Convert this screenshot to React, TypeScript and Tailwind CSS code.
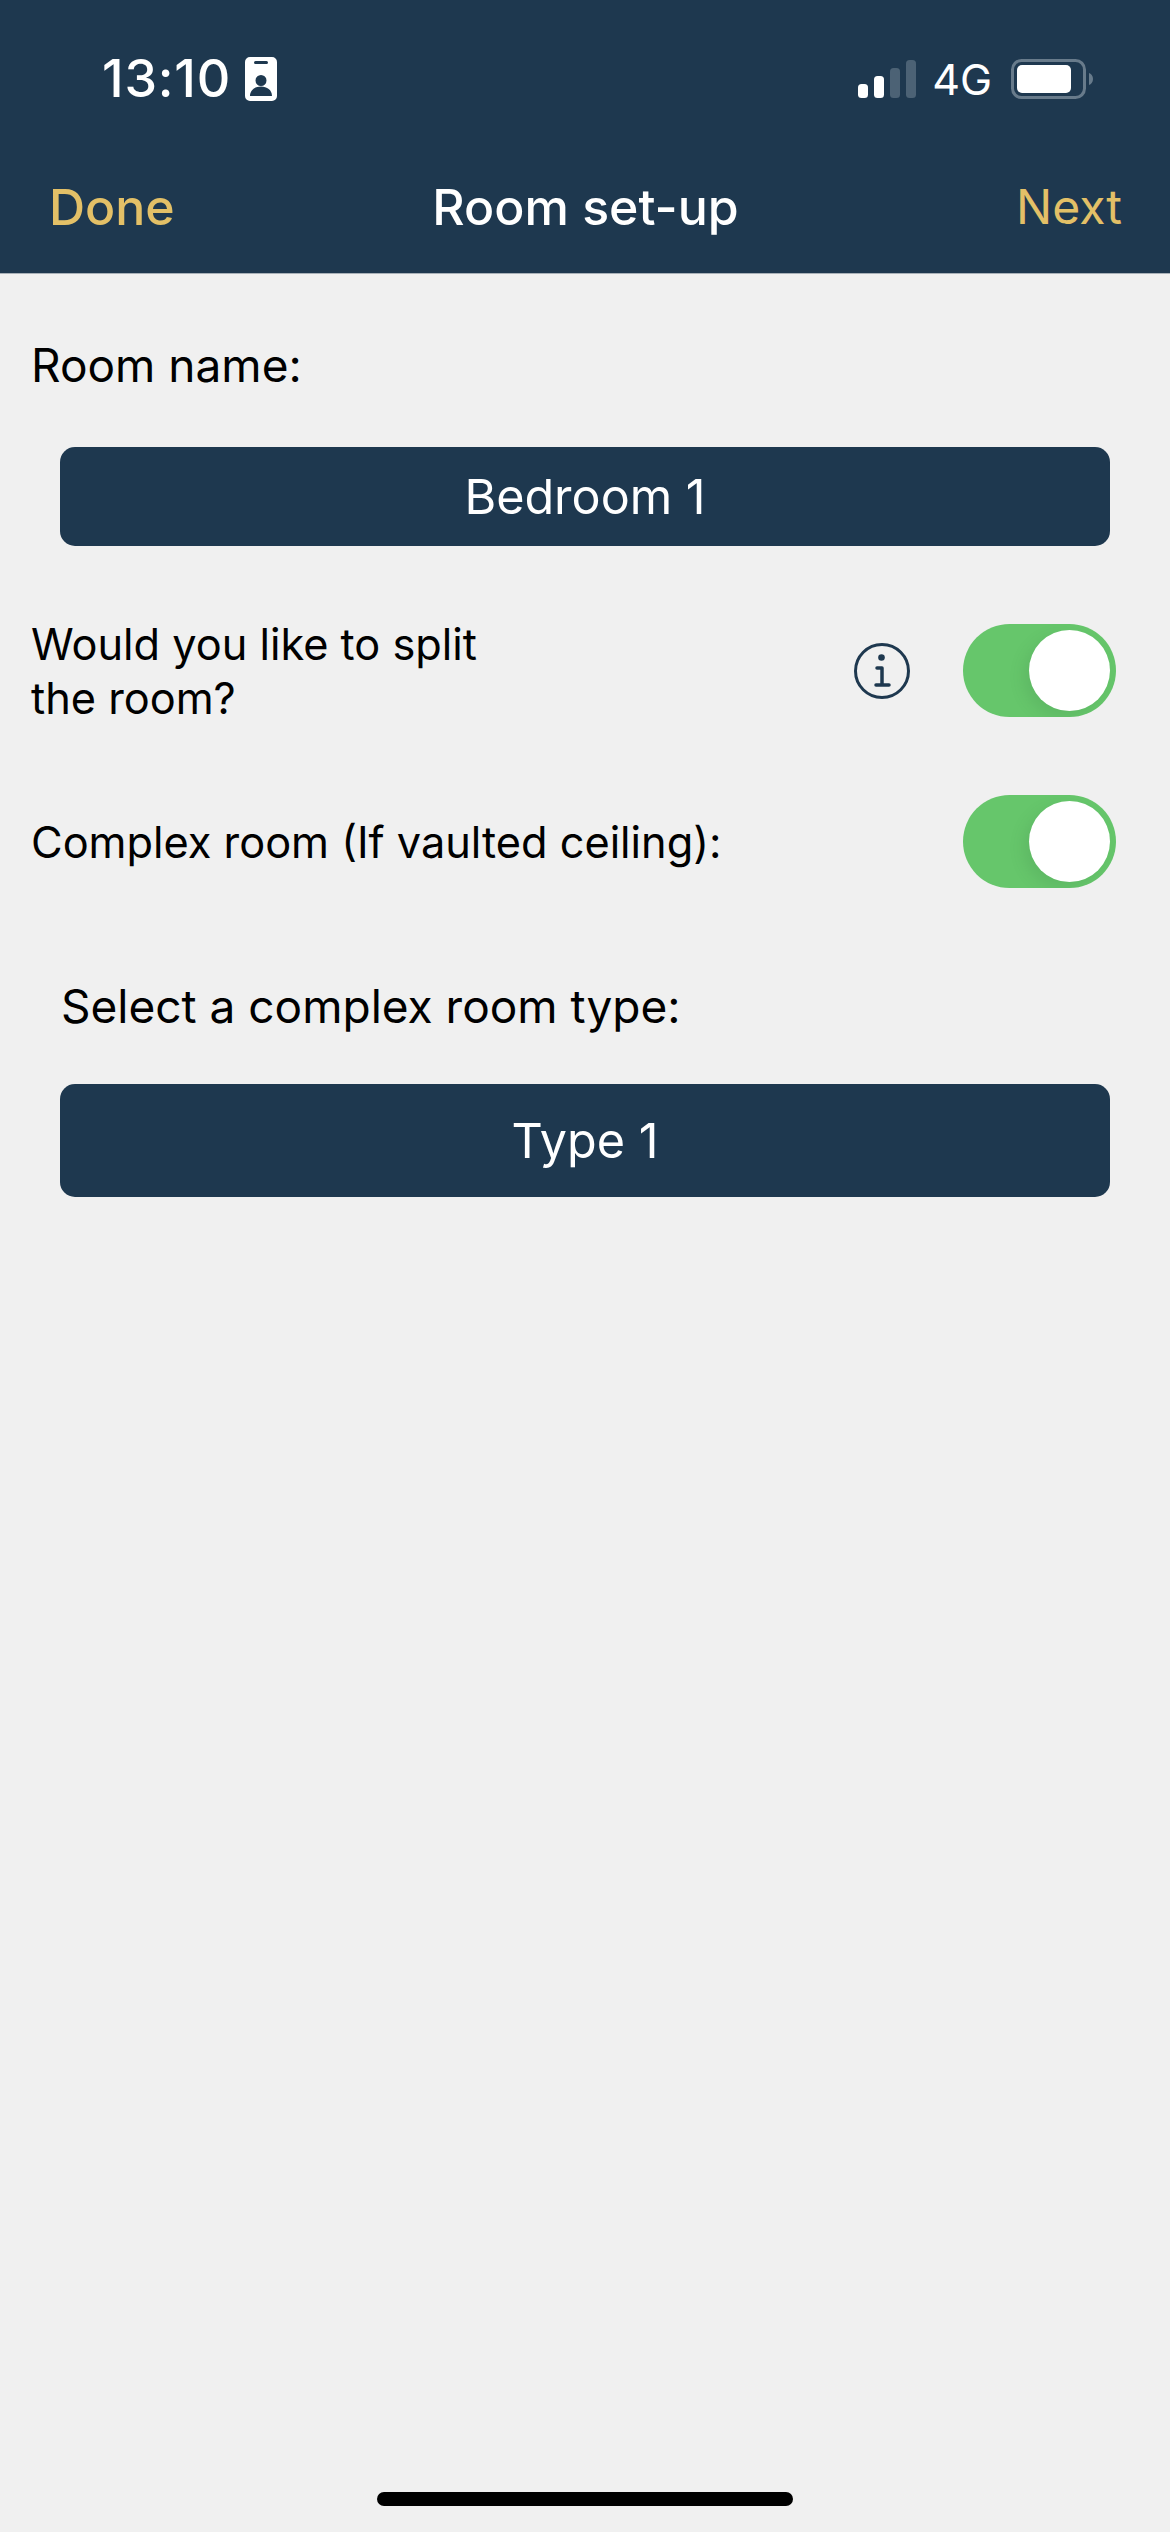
import { ReactNode } from 'react';

const FONT = "font-['Inter','Liberation_Sans',sans-serif]";

function ContactBadge() {
  return (
    <svg width="32" height="44" viewBox="0 0 32 44" className="ml-[14px]">
      <path
        fillRule="evenodd"
        fill="#ffffff"
        d="M5 0h22a5 5 0 0 1 5 5v34a5 5 0 0 1-5 5H5a5 5 0 0 1-5-5V5a5 5 0 0 1 5-5zM10.500 4a1.500 1.500 0 0 0 0 3h11a1.500 1.500 0 0 0 0-3zM16 18a5.500 5.500 0 0 0-5.500 5.500a5.500 5.500 0 0 0 11 0A5.500 5.500 0 0 0 16 18zM5 39h22c0-6-5-9.500-11-9.500S5 33 5 39z"
      />
    </svg>
  );
}

function SignalBars() {
  return (
    <svg width="58" height="38" viewBox="0 0 58 38">
      <rect x="0" y="24" width="10" height="14" rx="3.500" fill="#ffffff" />
      <rect x="16" y="16" width="10" height="22" rx="3.500" fill="#ffffff" />
      <rect x="32" y="8" width="10" height="30" rx="3.500" fill="#4c6275" />
      <rect x="48" y="0" width="10" height="38" rx="3.500" fill="#4c6275" />
    </svg>
  );
}

function Battery() {
  return (
    <svg width="82" height="40" viewBox="0 0 82 40">
      <rect x="1.500" y="1.500" width="72" height="37" rx="9" fill="none" stroke="#687b8b" strokeWidth="3" />
      <rect x="6" y="6" width="54" height="28" rx="5" fill="#ffffff" />
      <path d="M78 14c2 .5 4 3 4 6s-2 5.500-4 6z" fill="#687b8b" />
    </svg>
  );
}

function InfoIcon() {
  return (
    <svg width="56" height="56" viewBox="0 0 56 56" fill="none" stroke="#1e384f">
      <circle cx="28" cy="28" r="26.500" strokeWidth="3" />
      <circle cx="27.500" cy="14.500" r="3.300" fill="#1e384f" stroke="none" />
      <path d="M23 25h5v17M22 42h13" strokeWidth="3.500" strokeLinecap="round" strokeLinejoin="round" />
    </svg>
  );
}

function Toggle() {
  return (
    <div className="flex h-[93px] w-[153px] items-center justify-end overflow-hidden rounded-full bg-[#66c66b] pr-[6px]">
      <div className="h-[81px] w-[81px] rounded-full bg-white shadow-[-6px_6px_14px_rgba(60,130,70,0.18)]" />
    </div>
  );
}

function ValueBar({ children, className }: { children: ReactNode; className: string }) {
  return (
    <div className={`mx-[60px] flex items-center justify-center rounded-[15px] bg-[#1e384f] text-[48.500px] text-white ${className}`}>
      {children}
    </div>
  );
}

export default function App() {
  return (
    <div className={`flex h-[2532px] w-[1170px] flex-col overflow-hidden bg-[#f0f0f0] ${FONT}`}>
      <header className="h-[274px] shrink-0 border-b border-[#a9b1b8] bg-[#1e384f]">
        <div className="flex h-[179px] items-start justify-between pt-[57px]">
          <div className="ml-[102px] flex h-[44px] items-center">
            <span className="text-[52px] font-medium leading-none tracking-[0.8px] text-white">13:10</span>
            <ContactBadge />
          </div>
          <div className="mr-[77px] flex h-[44px] items-center">
            <SignalBars />
            <span className="ml-[16px] text-[43px] font-normal leading-none text-white">4G</span>
            <span className="ml-[19px] flex"><Battery /></span>
          </div>
        </div>
        <nav className="grid h-[56px] grid-cols-[1fr_auto_1fr] items-center pl-[49px] pr-[48px] text-[50px] leading-none">
          <span className="font-medium text-[#e3c067]">Done</span>
          <span className="font-medium text-white">Room set-up</span>
          <span className="justify-self-end text-[48px] text-[#e3c067]">Next</span>
        </nav>
      </header>

      <main className="flex flex-1 flex-col text-[43.300px] leading-[54px] text-black">
        <p className="mt-[64px] ml-[31px] text-[46px]">Room name:</p>
        <ValueBar className="mt-[55px] h-[99px]">Bedroom 1</ValueBar>

        <div className="mt-[78px] flex h-[93px] items-center pl-[31px] pr-[54px]">
          <p className="flex-1">
            Would you like to split
            <br />
            the room?
          </p>
          <span className="mr-[53px] flex"><InfoIcon /></span>
          <Toggle />
        </div>

        <div className="mt-[78px] flex h-[93px] items-center pl-[31px] pr-[54px]">
          <p className="flex-1">Complex room (If vaulted ceiling):</p>
          <Toggle />
        </div>

        <p className="mt-[91px] ml-[61px] text-[46px]">Select a complex room type:</p>
        <ValueBar className="mt-[51px] h-[113px]">Type 1</ValueBar>

        <div className="mt-auto mb-[26px] h-[14px] w-[416px] self-center rounded-full bg-black" />
      </main>
    </div>
  );
}
